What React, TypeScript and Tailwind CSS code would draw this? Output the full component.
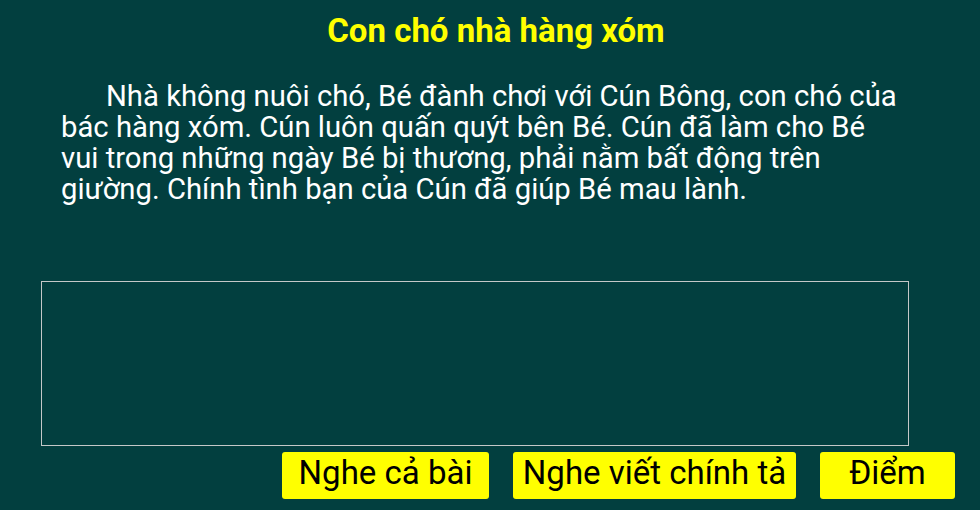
export default function App() {
  return (
    <div className="w-[980px] h-[510px] bg-[#023f3f] font-['Roboto',sans-serif] flex flex-col overflow-hidden">
      <h1 className="mt-[11px] text-[33px] leading-[40px] font-bold text-[#ffff00] text-center pl-[12px]">
        Con chó nhà hàng xóm
      </h1>
      <p className="mt-[30px] ml-[61px] w-[846px] text-white text-[29.25px] leading-[31px] indent-[45px]">
        Nhà không nuôi chó, Bé đành chơi với Cún Bông, con chó của bác hàng xóm. Cún luôn quấn quýt bên Bé. Cún đã làm cho Bé vui trong những ngày Bé bị thương, phải nằm bất động trên giường. Chính tình bạn của Cún đã giúp Bé mau lành.
      </p>
      <div className="mt-[76px] ml-[41px] w-[868px] h-[165px] border border-[#c4c8c8]"></div>
      <div className="mt-[6px] flex justify-end gap-[24px] pr-[25px]">
        <button className="w-[207px] h-[47px] pb-[6px] bg-[#ffff00] rounded-[3px] text-black text-[33px] leading-[41px]">
          Nghe cả bài
        </button>
        <button className="w-[283px] h-[47px] pb-[6px] bg-[#ffff00] rounded-[3px] text-black text-[33px] leading-[41px]">
          Nghe viết chính tả
        </button>
        <button className="w-[135px] h-[47px] pb-[6px] bg-[#ffff00] rounded-[3px] text-black text-[33px] leading-[41px]">
          Điểm
        </button>
      </div>
    </div>
  );
}
